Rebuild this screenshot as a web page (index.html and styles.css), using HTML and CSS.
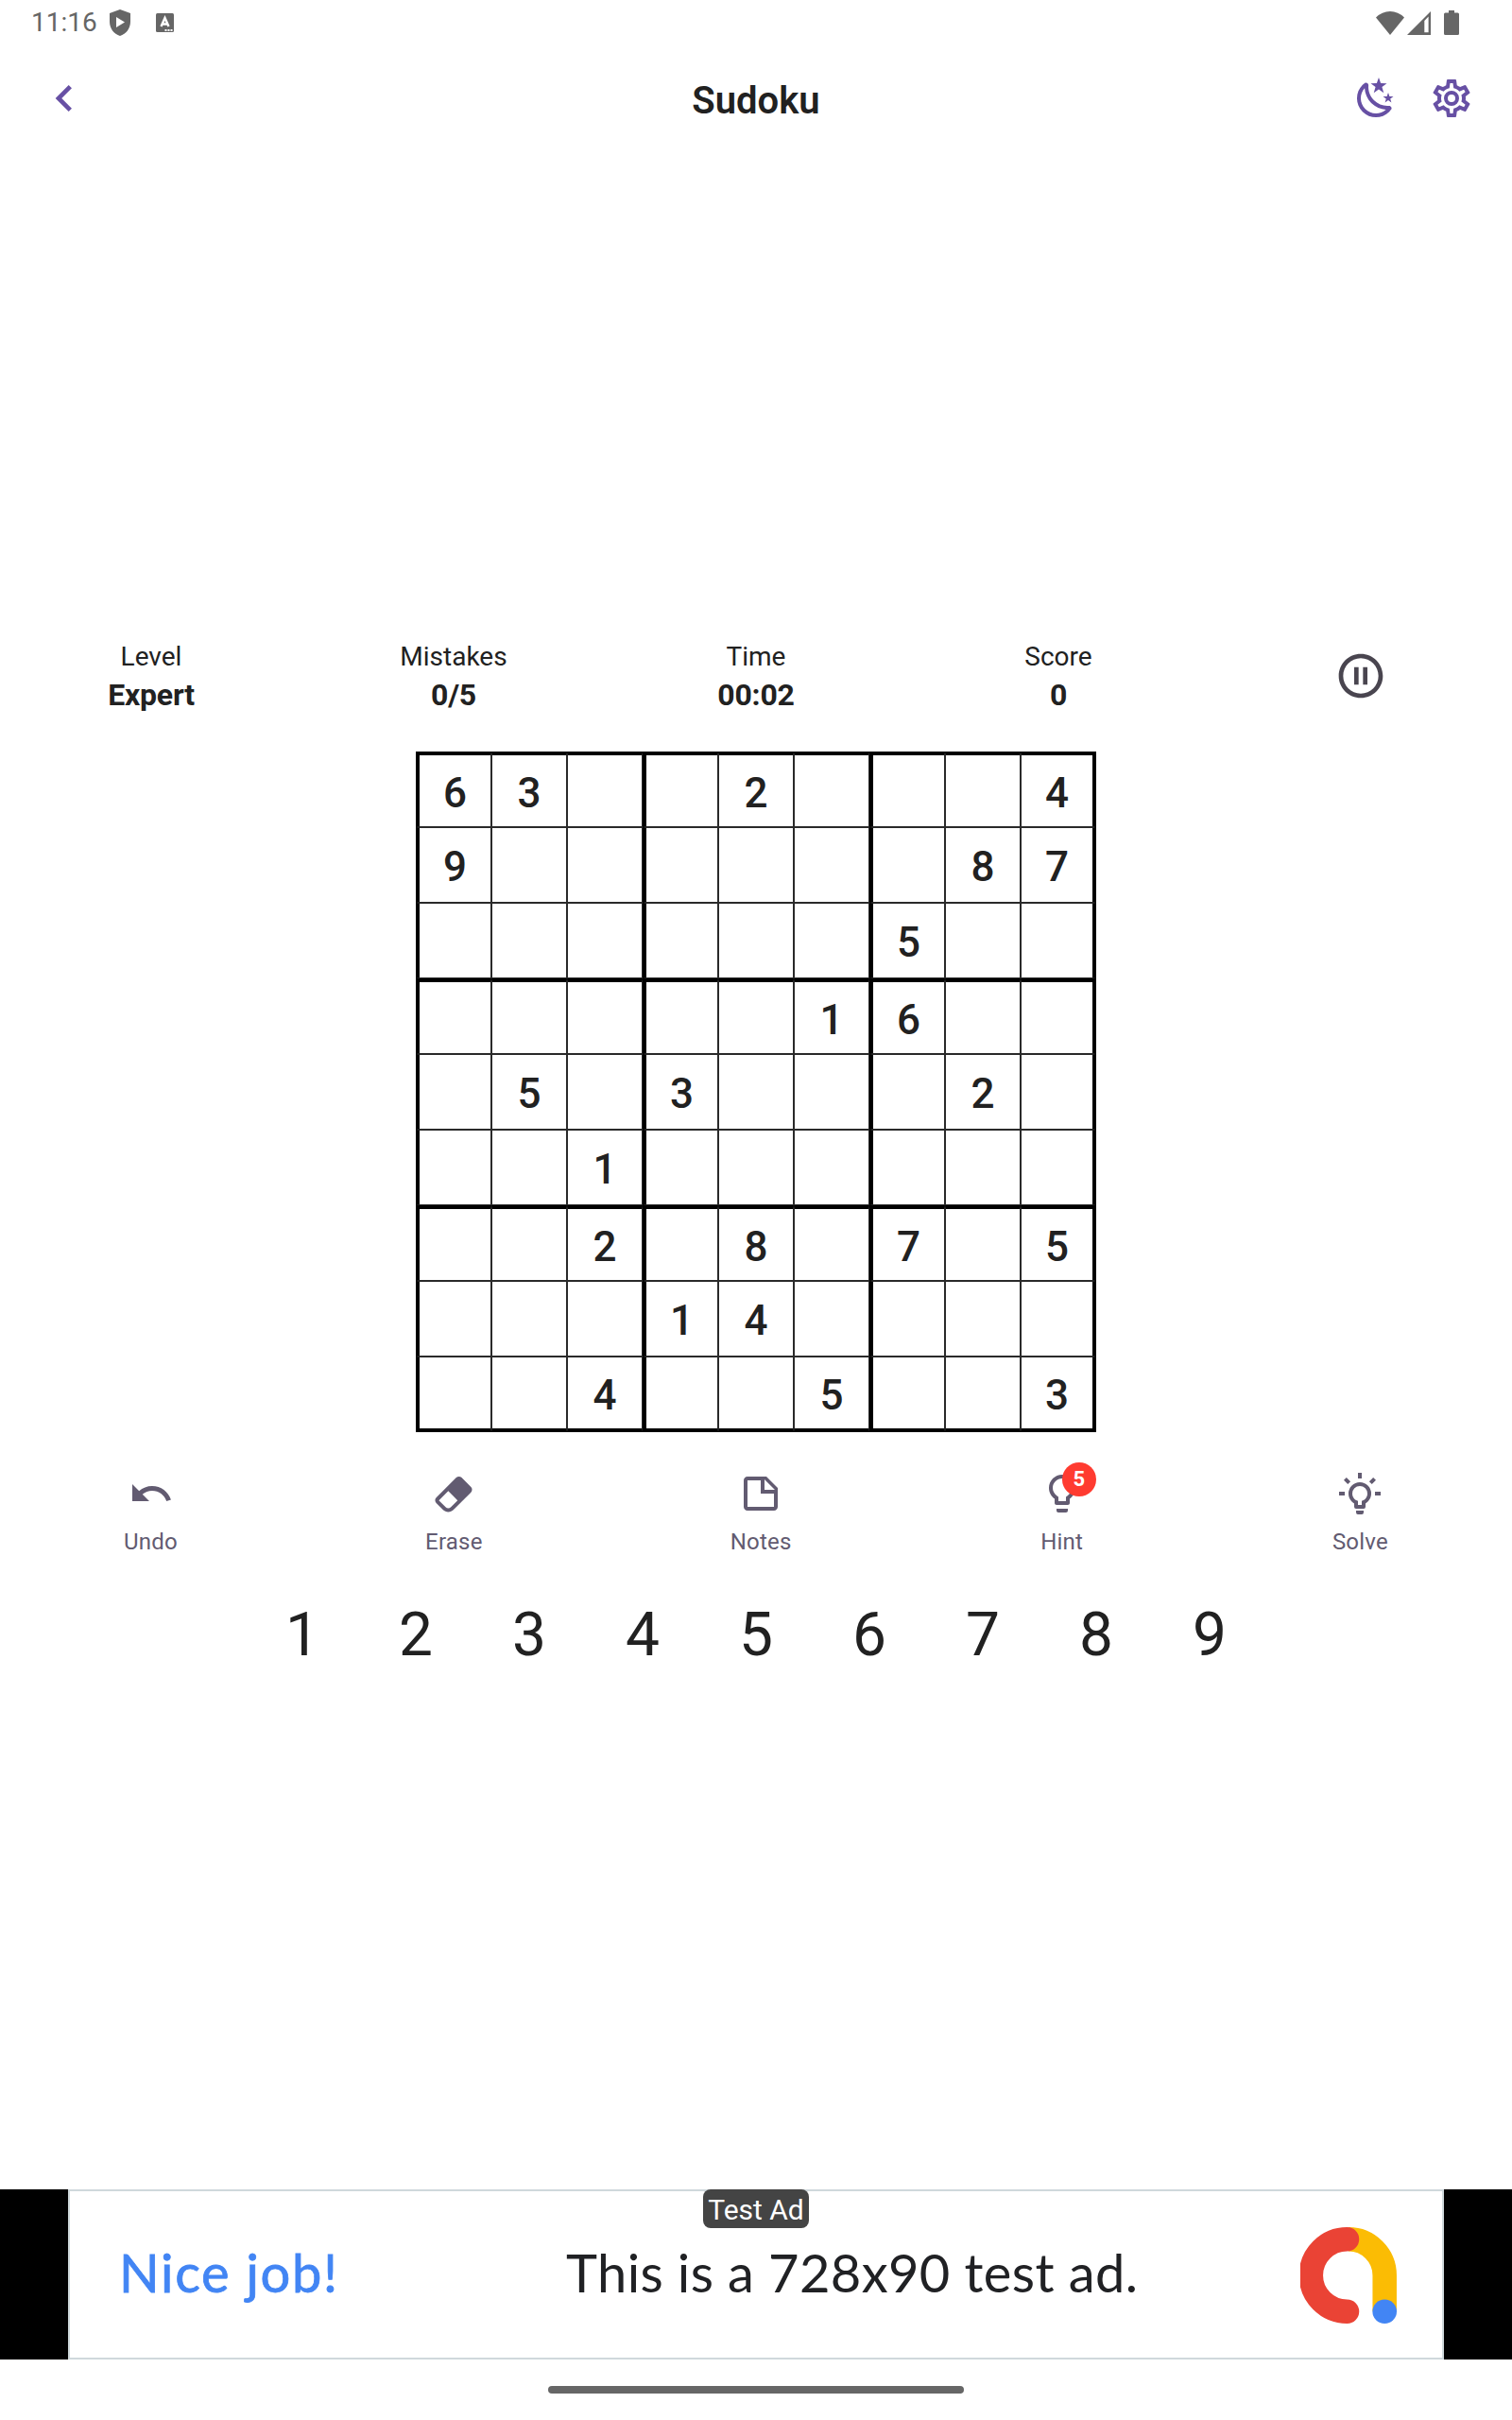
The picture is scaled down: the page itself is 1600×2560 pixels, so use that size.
FILE: index.html
```html
<!DOCTYPE html>
<html lang="en">
<head>
<meta charset="utf-8">
<title>Sudoku</title>
<link rel="stylesheet" href="styles.css">
</head>
<body>
<div class="screen">
  <div class="status-bar">
    <span class="clock">11:16</span>
    <svg class="shield" viewBox="0 0 22 28"><path fill-rule="evenodd" d="M11 0 22 4V13C22 20 17.500 26 11 28 4.500 26 0 20 0 13V4ZM7 8V19L16 13.500Z"/></svg>
    <svg class="letter-badge" viewBox="0 0 19 20"><rect width="19" height="20" rx="1.500"/><path d="M5.500 14 9.500 5 13.500 14M7 11.500H12" fill="none" stroke="#fff" stroke-width="2.400"/><path fill="#fff" d="M9.500 17h2v2h-2zM12.500 17h2v2h-2zM15.500 17h2v2h-2z"/></svg>
    <span class="spacer"></span>
    <svg class="wifi" viewBox="0 0 30 25"><path d="M0 6.500Q6.500 0 15 0T30 6.500L15 25Z"/></svg>
    <svg class="signal" viewBox="0 0 25 25"><path fill-rule="evenodd" d="M25 0V25H0ZM18.300 10V22.300H22.600V5.500Z"/></svg>
    <svg class="battery" viewBox="0 0 16 26"><path d="M5 0h6v2.500h3.500A1.500 1.500 0 0 1 16 4v20.500a1.500 1.500 0 0 1-1.500 1.500h-13A1.500 1.500 0 0 1 0 24.500V4a1.500 1.500 0 0 1 1.500-1.500H5z"/></svg>
  </div>

  <header class="app-bar">
    <svg class="back" viewBox="0 0 24 24"><path d="M15.410 16.580 10.830 12l4.580-4.590L14 6l-6 6 6 6z"/></svg>
    <h1 class="title">Sudoku</h1>
    <div class="actions">
      <svg class="icon" viewBox="0 0 24 24"><path d="M17.75,4.09L15.22,6.03L16.13,9.09L13.5,7.28L10.87,9.09L11.78,6.03L9.25,4.09L12.44,4L13.5,1L14.56,4L17.75,4.09M21.25,11L19.61,12.25L20.2,14.23L18.5,13.06L16.8,14.23L17.39,12.25L15.75,11L17.81,10.95L18.5,9L19.19,10.95L21.25,11M18.97,15.95C19.8,15.87 20.69,17.05 20.16,17.8C19.84,18.25 19.5,18.67 19.08,19.07C15.17,23 8.84,23 4.94,19.07C1.03,15.17 1.03,8.83 4.94,4.93C5.34,4.53 5.76,4.17 6.21,3.85C6.96,3.32 8.14,4.21 8.06,5.04C7.79,7.9 8.75,10.87 10.95,13.06C13.14,15.26 16.1,16.22 18.97,15.95M17.33,17.97C14.5,17.81 11.7,16.64 9.53,14.5C7.36,12.31 6.2,9.5 6.04,6.68C3.23,9.82 3.34,14.64 6.35,17.66C9.37,20.67 14.19,20.78 17.33,17.97Z"/></svg>
      <svg class="icon" viewBox="0 0 24 24"><path d="M12,8A4,4 0 0,1 16,12A4,4 0 0,1 12,16A4,4 0 0,1 8,12A4,4 0 0,1 12,8M12,10A2,2 0 0,0 10,12A2,2 0 0,0 12,14A2,2 0 0,0 14,12A2,2 0 0,0 12,10M10,22C9.75,22 9.54,21.82 9.5,21.58L9.13,18.93C8.5,18.68 7.96,18.34 7.44,17.94L4.95,18.95C4.73,19.03 4.46,18.95 4.34,18.73L2.34,15.27C2.21,15.05 2.27,14.78 2.46,14.63L4.57,12.97L4.5,12L4.57,11L2.46,9.37C2.27,9.22 2.21,8.95 2.34,8.73L4.34,5.27C4.46,5.05 4.73,4.96 4.95,5.05L7.44,6.05C7.96,5.66 8.5,5.32 9.13,5.07L9.5,2.42C9.54,2.18 9.75,2 10,2H14C14.25,2 14.46,2.18 14.5,2.42L14.87,5.07C15.5,5.32 16.04,5.66 16.56,6.05L19.05,5.05C19.27,4.96 19.54,5.05 19.66,5.27L21.66,8.73C21.79,8.95 21.73,9.22 21.54,9.37L19.43,11L19.5,12L19.43,13L21.54,14.63C21.73,14.78 21.79,15.05 21.66,15.27L19.66,18.73C19.54,18.95 19.27,19.04 19.05,18.95L16.56,17.95C16.04,18.34 15.5,18.68 14.87,18.93L14.5,21.58C14.46,21.82 14.25,22 14,22H10M11.25,4L10.88,6.61C9.68,6.86 8.62,7.5 7.85,8.39L5.44,7.35L4.69,8.65L6.8,10.2C6.4,11.37 6.4,12.64 6.8,13.8L4.68,15.36L5.43,16.66L7.86,15.62C8.63,16.5 9.68,17.14 10.87,17.38L11.24,20H12.76L13.13,17.39C14.32,17.14 15.37,16.5 16.14,15.62L18.57,16.66L19.32,15.36L17.2,13.81C17.6,12.64 17.6,11.37 17.2,10.2L19.31,8.65L18.56,7.35L16.15,8.39C15.38,7.5 14.32,6.86 13.12,6.62L12.75,4H11.25Z"/></svg>
    </div>
  </header>

  <main class="game">
    <section class="stats">
      <div class="stat"><span class="stat-label">Level</span><strong class="stat-value">Expert</strong></div>
      <div class="stat"><span class="stat-label">Mistakes</span><strong class="stat-value">0/5</strong></div>
      <div class="stat"><span class="stat-label">Time</span><strong class="stat-value">00:02</strong></div>
      <div class="stat"><span class="stat-label">Score</span><strong class="stat-value">0</strong></div>
      <div class="stat"><svg class="pause" viewBox="0 0 24 24"><path d="M9 16h2V8H9v8zm3-14C6.480 2 2 6.480 2 12s4.480 10 10 10 10-4.480 10-10S17.520 2 12 2zm0 18c-4.410 0-8-3.590-8-8s3.590-8 8-8 8 3.590 8 8-3.590 8-8 8zm1-4h2V8h-2v8z"/></svg></div>
    </section>

    <section class="board">
      <div class="cell">6</div><div class="cell">3</div><div class="cell"></div><div class="cell"></div><div class="cell">2</div><div class="cell"></div><div class="cell"></div><div class="cell"></div><div class="cell">4</div>
      <div class="cell">9</div><div class="cell"></div><div class="cell"></div><div class="cell"></div><div class="cell"></div><div class="cell"></div><div class="cell"></div><div class="cell">8</div><div class="cell">7</div>
      <div class="cell"></div><div class="cell"></div><div class="cell"></div><div class="cell"></div><div class="cell"></div><div class="cell"></div><div class="cell">5</div><div class="cell"></div><div class="cell"></div>
      <div class="cell"></div><div class="cell"></div><div class="cell"></div><div class="cell"></div><div class="cell"></div><div class="cell">1</div><div class="cell">6</div><div class="cell"></div><div class="cell"></div>
      <div class="cell"></div><div class="cell">5</div><div class="cell"></div><div class="cell">3</div><div class="cell"></div><div class="cell"></div><div class="cell"></div><div class="cell">2</div><div class="cell"></div>
      <div class="cell"></div><div class="cell"></div><div class="cell">1</div><div class="cell"></div><div class="cell"></div><div class="cell"></div><div class="cell"></div><div class="cell"></div><div class="cell"></div>
      <div class="cell"></div><div class="cell"></div><div class="cell">2</div><div class="cell"></div><div class="cell">8</div><div class="cell"></div><div class="cell">7</div><div class="cell"></div><div class="cell">5</div>
      <div class="cell"></div><div class="cell"></div><div class="cell"></div><div class="cell">1</div><div class="cell">4</div><div class="cell"></div><div class="cell"></div><div class="cell"></div><div class="cell"></div>
      <div class="cell"></div><div class="cell"></div><div class="cell">4</div><div class="cell"></div><div class="cell"></div><div class="cell">5</div><div class="cell"></div><div class="cell"></div><div class="cell">3</div>
    </section>

    <section class="tools">
      <div class="tool"><svg class="icon" viewBox="0 0 24 24"><path d="M12.500 8c-2.650 0-5.050.99-6.900 2.600L2 7v9h9l-3.620-3.620c1.390-1.160 3.160-1.880 5.120-1.880 3.540 0 6.550 2.310 7.600 5.500l2.370-.78C21.080 11.030 17.150 8 12.500 8z"/></svg><span>Undo</span></div>
      <div class="tool"><svg class="icon" viewBox="0 0 24 24"><path d="M16.24,3.56L21.19,8.5C21.97,9.29 21.97,10.55 21.19,11.34L12,20.53C10.44,22.09 7.91,22.09 6.34,20.53L2.81,17C2.03,16.21 2.03,14.95 2.81,14.16L13.41,3.56C14.2,2.78 15.46,2.78 16.24,3.56M4.22,15.58L7.76,19.11C8.54,19.9 9.8,19.9 10.59,19.11L14.12,15.58L9.17,10.63L4.22,15.58Z"/></svg><span>Erase</span></div>
      <div class="tool"><svg class="icon" viewBox="0 0 24 24"><path d="M14 10V4.500L19.500 10M5 3C3.890 3 3 3.890 3 5V19C3 20.100 3.890 21 5 21H19C20.100 21 21 20.100 21 19V9L15 3H5M5 5H12V12H19V19H5V5Z"/></svg><span>Notes</span></div>
      <div class="tool"><svg class="icon" viewBox="0 0 24 24"><path d="M9 21c0 .55.45 1 1 1h4c.55 0 1-.45 1-1v-1H9v1zm3-19C8.140 2 5 5.140 5 9c0 2.380 1.190 4.470 3 5.740V17c0 .55.45 1 1 1h6c.55 0 1-.45 1-1v-2.260c1.810-1.270 3-3.360 3-5.740 0-3.860-3.140-7-7-7zm2.850 11.100l-.85.6V16h-4v-2.300l-.85-.6C7.800 12.160 7 10.630 7 9c0-2.760 2.240-5 5-5s5 2.240 5 5c0 1.630-.8 3.160-2.150 4.100z"/></svg><span>Hint</span><b class="count">5</b></div>
      <div class="tool"><svg class="icon" viewBox="0 0 24 24"><path d="M20,11H23V13H20V11M1,11H4V13H1V11M13,1V4H11V1H13M4.92,3.5L7.05,5.64L5.63,7.05L3.5,4.93L4.92,3.5M16.95,5.63L19.07,3.5L20.5,4.93L18.37,7.05L16.95,5.63M12,6A6,6 0 0,1 18,12C18,14.22 16.79,16.16 15,17.2V19A1,1 0 0,1 14,20H10A1,1 0 0,1 9,19V17.2C7.21,16.16 6,14.22 6,12A6,6 0 0,1 12,6M14,21V22A1,1 0 0,1 13,23H11A1,1 0 0,1 10,22V21H14M11,18H13V15.87C14.73,15.43 16,13.86 16,12A4,4 0 0,0 12,8A4,4 0 0,0 8,12C8,13.86 9.27,15.43 11,15.87V18Z"/></svg><span>Solve</span></div>
    </section>

    <section class="keypad">
      <span>1</span><span>2</span><span>3</span><span>4</span><span>5</span><span>6</span><span>7</span><span>8</span><span>9</span>
    </section>
  </main>

  <aside class="ad">
    <div class="ad-body">
      <span class="ad-lead">Nice job!</span>
      <span class="ad-text">This is a 728x90 test ad.</span>
      <svg class="ad-logo" viewBox="0 0 102 102"><g fill="none" stroke-width="25.500"><path stroke="#fbbc04" d="M51 12.800A38.200 38.200 0 0 1 89.200 51V89"/><path stroke="#ea4335" stroke-linecap="round" d="M49.500 12.800A38.200 38.200 0 0 0 49.500 89.200"/></g><circle cx="89.200" cy="89.200" r="12.800" fill="#4285f4"/></svg>
      <span class="ad-tag">Test Ad</span>
    </div>
  </aside>

  <div class="nav-bar"><span class="nav-pill"></span></div>
</div>
</body>
</html>
```
FILE: styles.css
```css
* { box-sizing: border-box; }

body {
  margin: 0;
  background: #fff;
  color: #212121;
  font-family: Roboto, "Liberation Sans", sans-serif;
}

svg { display: block; fill: currentColor; flex: none; }

.screen {
  display: flex;
  flex-direction: column;
  width: 1600px;
  height: 2560px;
  overflow: hidden;
}

.status-bar {
  display: flex;
  align-items: center;
  height: 48px;
  padding: 0 56px 0 33px;
  color: #666;
}
.clock { width: 83px; font-size: 28px; line-height: 48px; }
.shield { width: 22px; height: 28px; }
.letter-badge { width: 19px; height: 20px; margin-left: 27px; }
.spacer { flex: 1; }
.wifi { width: 30px; height: 25px; }
.signal { width: 25px; height: 25px; margin-left: 3px; }
.battery { width: 16px; height: 26px; margin-left: 14px; }

.app-bar {
  display: grid;
  grid-template-columns: 1fr auto 1fr;
  align-items: center;
  height: 112px;
  padding: 0 40px;
  color: #6750a4;
}
.back { width: 56px; height: 56px; }
.title { margin: 0; padding-top: 6px; font-size: 40px; font-weight: 600; line-height: 48px; color: #212121; }
.actions { display: flex; justify-content: flex-end; gap: 32px; }
.icon { width: 48px; height: 48px; }

.game {
  flex: 1;
  display: flex;
  flex-direction: column;
  align-items: center;
  padding-top: 512px;
}

.stats {
  display: grid;
  grid-template-columns: repeat(5, 1fr);
  width: 100%;
  height: 86px;
}
.stat { display: flex; flex-direction: column; align-items: center; justify-content: center; }
.stat-label { font-size: 28px; line-height: 40px; padding-top: 1px; }
.stat-value { font-size: 32px; line-height: 41px; letter-spacing: -0.2px; }
.pause { width: 56px; height: 56px; color: #49454f; }

.board {
  display: grid;
  grid-template: repeat(9, 80px) / repeat(9, 80px);
  margin-top: 37px;
}
.cell {
  display: flex;
  align-items: center;
  justify-content: center;
  padding-top: 4px;
  border: 1px solid #2a2a2a;
  font-size: 44px;
  font-weight: 500;
  line-height: 52px;
}
.cell:nth-child(9n + 1), .cell:nth-child(9n + 4), .cell:nth-child(9n + 7) { border-left: 4px solid #000; }
.cell:nth-child(9n) { border-right: 4px solid #000; }
.cell:nth-child(-n + 9),
.cell:nth-child(n + 28):nth-child(-n + 36),
.cell:nth-child(n + 55):nth-child(-n + 63) { border-top: 4px solid #000; }
.cell:nth-child(n + 73) { border-bottom: 4px solid #000; }

.tools {
  display: flex;
  justify-content: space-around;
  width: 100%;
  margin-top: 41px;
  color: #625b71;
}
.tool {
  position: relative;
  display: flex;
  flex-direction: column;
  align-items: center;
  gap: 13px;
  font-size: 24px;
  line-height: 28px;
  letter-spacing: 0.2px;
}
.count {
  position: absolute;
  top: -9px;
  left: 24px;
  width: 36px;
  border-radius: 50%;
  background: #ff3b30;
  color: #fff;
  font-size: 22px;
  line-height: 36px;
  letter-spacing: 0;
  text-align: center;
}

.keypad {
  display: grid;
  grid-template-columns: repeat(9, 120px);
  margin-top: 47px;
  font-size: 64px;
  line-height: 75px;
  text-align: center;
}

.ad {
  display: flex;
  justify-content: center;
  height: 180px;
  background: #000;
}
.ad-body {
  position: relative;
  display: flex;
  align-items: center;
  width: 1456px;
  padding: 2px 48px 0 52px;
  border: 2px solid #cfd8dc;
  background: #fff;
  font-family: Lato, sans-serif;
  font-size: 56px;
  line-height: 64px;
  white-space: nowrap;
}
.ad-lead { width: 473px; padding-bottom: 6px; color: #4285f4; letter-spacing: 1.7px; -webkit-text-stroke: 0.8px; }
.ad-text { flex: 1; padding-bottom: 6px; color: #202124; letter-spacing: 0.4px; }
.ad-logo { width: 102px; height: 102px; }
.ad-tag {
  position: absolute;
  top: -2px;
  left: 670px;
  width: 112px;
  height: 41px;
  border-radius: 8px;
  background: #444;
  color: #fff;
  font: 30px/43px Roboto, sans-serif;
  text-align: center;
}

.nav-bar { display: flex; justify-content: center; height: 64px; padding-top: 28px; }
.nav-pill { width: 440px; height: 8px; border-radius: 4px; background: #666; }
```
